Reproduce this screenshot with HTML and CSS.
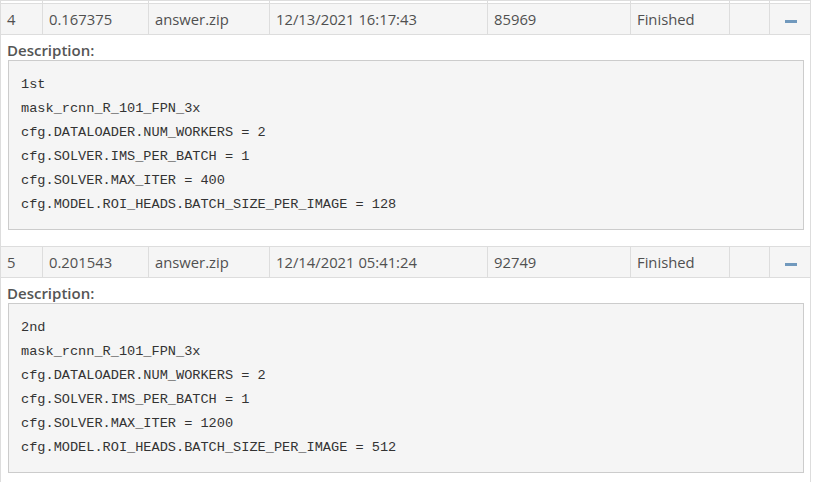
FILE: index.html
```html
<!DOCTYPE html>
<html>
<head>
<meta charset="utf-8">
<link rel="stylesheet" href="styles.css">
</head>
<body>
<table class="subs">
  <colgroup>
    <col class="c1"><col class="c2"><col class="c3"><col class="c4"><col class="c5"><col class="c6"><col class="c7"><col class="c8">
  </colgroup>
  <tr class="stub"><td></td><td></td><td></td><td></td><td></td><td></td><td></td><td></td></tr>
  <tr class="row">
    <td>4</td><td>0.167375</td><td>answer.zip</td><td>12/13/2021 16:17:43</td><td>85969</td><td>Finished</td><td></td><td class="act"><span class="minus"></span></td>
  </tr>
  <tr class="desc">
    <td colspan="8">
      <div class="label">Description:</div>
      <pre class="box">1st
mask_rcnn_R_101_FPN_3x
cfg.DATALOADER.NUM_WORKERS = 2
cfg.SOLVER.IMS_PER_BATCH = 1
cfg.SOLVER.MAX_ITER = 400
cfg.MODEL.ROI_HEADS.BATCH_SIZE_PER_IMAGE = 128</pre>
    </td>
  </tr>
  <tr class="row">
    <td>5</td><td>0.201543</td><td>answer.zip</td><td>12/14/2021 05:41:24</td><td>92749</td><td>Finished</td><td></td><td class="act"><span class="minus"></span></td>
  </tr>
  <tr class="desc">
    <td colspan="8">
      <div class="label">Description:</div>
      <pre class="box">2nd
mask_rcnn_R_101_FPN_3x
cfg.DATALOADER.NUM_WORKERS = 2
cfg.SOLVER.IMS_PER_BATCH = 1
cfg.SOLVER.MAX_ITER = 1200
cfg.MODEL.ROI_HEADS.BATCH_SIZE_PER_IMAGE = 512</pre>
    </td>
  </tr>
</table>
</body>
</html>
```

FILE: styles.css
```css
html, body {
  margin: 0;
  padding: 0;
  background: #fff;
}
body {
  font-family: "Open Sans", "Noto Sans", sans-serif;
  color: #505050;
}
.subs {
  border-collapse: collapse;
  table-layout: fixed;
  width: 810px;
  font-size: 14.8px;
}
.c1 { width: 42px; }
.c2 { width: 106px; }
.c3 { width: 121px; }
.c4 { width: 218px; }
.c5 { width: 143px; }
.c6 { width: 99px; }
.c7 { width: 40px; }
.c8 { width: 41px; }
.subs td {
  border: 1px solid #dddddd;
  padding: 0 6px;
  vertical-align: middle;
}
.stub td {
  height: 2px;
  padding: 0;
  background: #fff;
}
.row td {
  height: 30px;
  background: #f5f5f5;
  line-height: 20px;
  white-space: nowrap;
}
.act {
  text-align: center;
}
.minus {
  display: inline-block;
  width: 12px;
  height: 3px;
  background: #7199bd;
  vertical-align: middle;
  margin-left: 2px;
}
.desc td {
  background: #fff;
  padding: 5px 6px 16px 7px;
}
.label {
  font-weight: 600;
  font-size: 15px;
  line-height: 20px;
  color: #555;
  margin-left: -1px;
}
.box {
  margin: 0;
  border: 1px solid #cccccc;
  background: #f5f5f5;
  padding: 12px;
  font-family: "Liberation Mono", "DejaVu Sans Mono", monospace;
  font-size: 13.6px;
  line-height: 24px;
  color: #333;
}
```
